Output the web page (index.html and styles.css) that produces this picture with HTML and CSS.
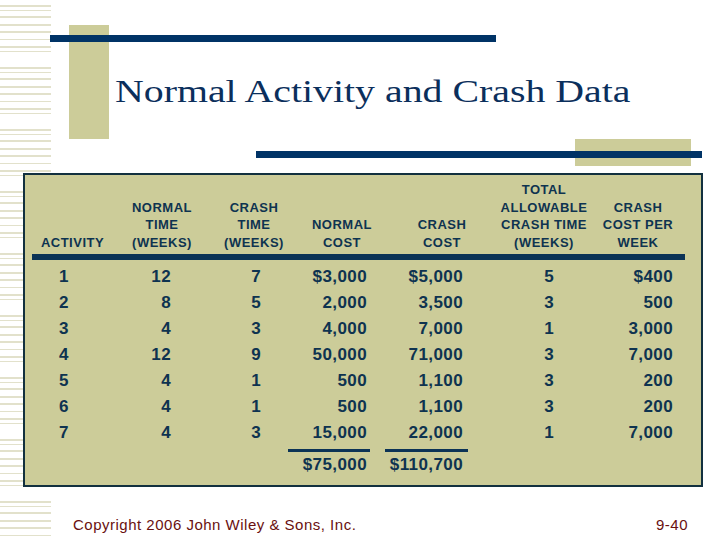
FILE: index.html
```html
<!DOCTYPE html>
<html>
<head>
<meta charset="utf-8">
<link rel="stylesheet" href="styles.css">
</head>
<body>
<div class="slide">
  <header class="head">
    <div class="title-row">
      <div class="accent"></div>
      <h1 class="title">Normal Activity and Crash Data</h1>
    </div>
    <div class="accent2"></div>
    <div class="bar bar-top"></div>
    <div class="bar bar-mid"></div>
  </header>
  <section class="table-box">
    <div class="grid thead">
      <div class="th">ACTIVITY</div>
      <div class="th">NORMAL<br>TIME<br>(WEEKS)</div>
      <div class="th">CRASH<br>TIME<br>(WEEKS)</div>
      <div class="th">NORMAL<br>COST</div>
      <div class="th">CRASH<br>COST</div>
      <div class="th">TOTAL<br>ALLOWABLE<br>CRASH TIME<br>(WEEKS)</div>
      <div class="th">CRASH<br>COST PER<br>WEEK</div>
    </div>
    <div class="rule"></div>
    <div class="grid tbody">
      <div class="c1">1</div><div class="c2">12</div><div class="c3">7</div><div class="c4">$3,000</div><div class="c5">$5,000</div><div class="c6">5</div><div class="c7">$400</div>
      <div class="c1">2</div><div class="c2">8</div><div class="c3">5</div><div class="c4">2,000</div><div class="c5">3,500</div><div class="c6">3</div><div class="c7">500</div>
      <div class="c1">3</div><div class="c2">4</div><div class="c3">3</div><div class="c4">4,000</div><div class="c5">7,000</div><div class="c6">1</div><div class="c7">3,000</div>
      <div class="c1">4</div><div class="c2">12</div><div class="c3">9</div><div class="c4">50,000</div><div class="c5">71,000</div><div class="c6">3</div><div class="c7">7,000</div>
      <div class="c1">5</div><div class="c2">4</div><div class="c3">1</div><div class="c4">500</div><div class="c5">1,100</div><div class="c6">3</div><div class="c7">200</div>
      <div class="c1">6</div><div class="c2">4</div><div class="c3">1</div><div class="c4">500</div><div class="c5">1,100</div><div class="c6">3</div><div class="c7">200</div>
      <div class="c1">7</div><div class="c2">4</div><div class="c3">3</div><div class="c4">15,000</div><div class="c5">22,000</div><div class="c6">1</div><div class="c7">7,000</div>
    </div>
    <div class="grid tfoot">
      <div></div><div></div><div></div>
      <div class="tot tot4"><span class="sum">$75,000</span></div>
      <div class="tot tot5"><span class="sum">$110,700</span></div>
      <div></div><div></div>
    </div>
  </section>
  <footer class="foot">
    <span>Copyright 2006 John Wiley &amp; Sons, Inc.</span>
    <span>9-40</span>
  </footer>
</div>
</body>
</html>
```
FILE: styles.css
```css
html, body {
  margin: 0;
  padding: 0;
  background: #ffffff;
}

.slide {
  width: 720px;
  height: 540px;
  overflow: hidden;
  background-color: #ffffff;
  background-image: repeating-linear-gradient(to bottom,
    #e2e1cb 0px, #e2e1cb 2px, transparent 2px, transparent 5px,
    #e2e1cb 5px, #e2e1cb 6px, transparent 6px, transparent 11px,
    #e2e1cb 11px, #e2e1cb 13px, transparent 13px, transparent 19px,
    #e2e1cb 19px, #e2e1cb 21px, transparent 21px, transparent 26px,
    #e2e1cb 26px, #e2e1cb 28px, transparent 28px, transparent 34px,
    #e2e1cb 34px, #e2e1cb 35px, transparent 35px, transparent 41px,
    #e2e1cb 41px, #e2e1cb 43px, transparent 43px, transparent 46px,
    #e2e1cb 46px, #e2e1cb 47px, transparent 47px, transparent 62px);
  background-size: 51px 100%;
  background-repeat: no-repeat;
  background-position: 0 5px;
}

/* ---------- header ---------- */
.head {
  position: relative;
  height: 166px;
}

.title-row {
  display: flex;
  align-items: flex-start;
  padding: 25px 0 0 69px;
}

.accent {
  flex: none;
  width: 40px;
  height: 114px;
  background: #cccc99;
}

.title {
  margin: 51px 0 0 6px;
  font-family: "Liberation Serif", "Times New Roman", serif;
  font-weight: normal;
  font-size: 31px;
  line-height: 31px;
  color: #0b2f5c;
  white-space: nowrap;
  transform: scaleX(1.285);
  transform-origin: left center;
}

.accent2 {
  margin-left: 575px;
  width: 116px;
  height: 27px;
  background: #cccc99;
}

.bar {
  position: absolute;
  height: 7px;
  width: 446px;
  background: #003366;
}
.bar-top { left: 50px; top: 35px; }
.bar-mid { left: 256px; top: 151px; }

/* ---------- table ---------- */
.table-box {
  box-sizing: border-box;
  margin: 7px 0 0 23px;
  width: 680px;
  height: 314px;
  border: 2px solid #12303f;
  background: #cccc99;
  padding: 0 16px 0 7px;
  font-family: "Liberation Sans", Arial, sans-serif;
  font-weight: bold;
  color: #0e3350;
}

.grid {
  display: grid;
  grid-template-columns: 81px 98px 86px 90px 110px 94px 94px;
}

.thead {
  box-sizing: border-box;
  height: 79px;
  align-items: end;
  padding-bottom: 3px;
}

.th {
  text-align: center;
  font-size: 13px;
  line-height: 17.5px;
  letter-spacing: 0.5px;
}

.rule {
  height: 6px;
  background: #0b3356;
}

.tbody {
  padding-top: 4px;
  font-size: 17px;
  line-height: 26px;
  letter-spacing: 0.4px;
}

.c1 { text-align: left; padding-left: 27px; }
.c2 { text-align: right; padding-right: 40px; }
.c3 { text-align: right; padding-right: 36px; }
.c4 { text-align: right; padding-right: 20px; }
.c5 { text-align: right; padding-right: 34px; }
.c6 { text-align: right; padding-right: 37px; }
.c7 { text-align: right; padding-right: 12px; }

.tfoot {
  margin-top: 3px;
  font-size: 17px;
  line-height: 26px;
  letter-spacing: 0.4px;
}

.tot {
  display: flex;
  justify-content: flex-end;
}
.tot4 { padding-right: 17px; }
.tot5 { padding-right: 29px; }

.sum {
  flex: none;
  box-sizing: border-box;
  border-top: 3px solid #0b3356;
  text-align: right;
}
.tot4 .sum { width: 82px; padding-right: 3px; }
.tot5 .sum { width: 83px; padding-right: 5px; }

/* ---------- footer ---------- */
.foot {
  display: flex;
  justify-content: space-between;
  margin-top: 29px;
  padding: 0 32px 0 73px;
  font-family: "Liberation Sans", Arial, sans-serif;
  font-size: 15px;
  line-height: 18px;
  letter-spacing: 0.5px;
  color: #6a1010;
}
```
